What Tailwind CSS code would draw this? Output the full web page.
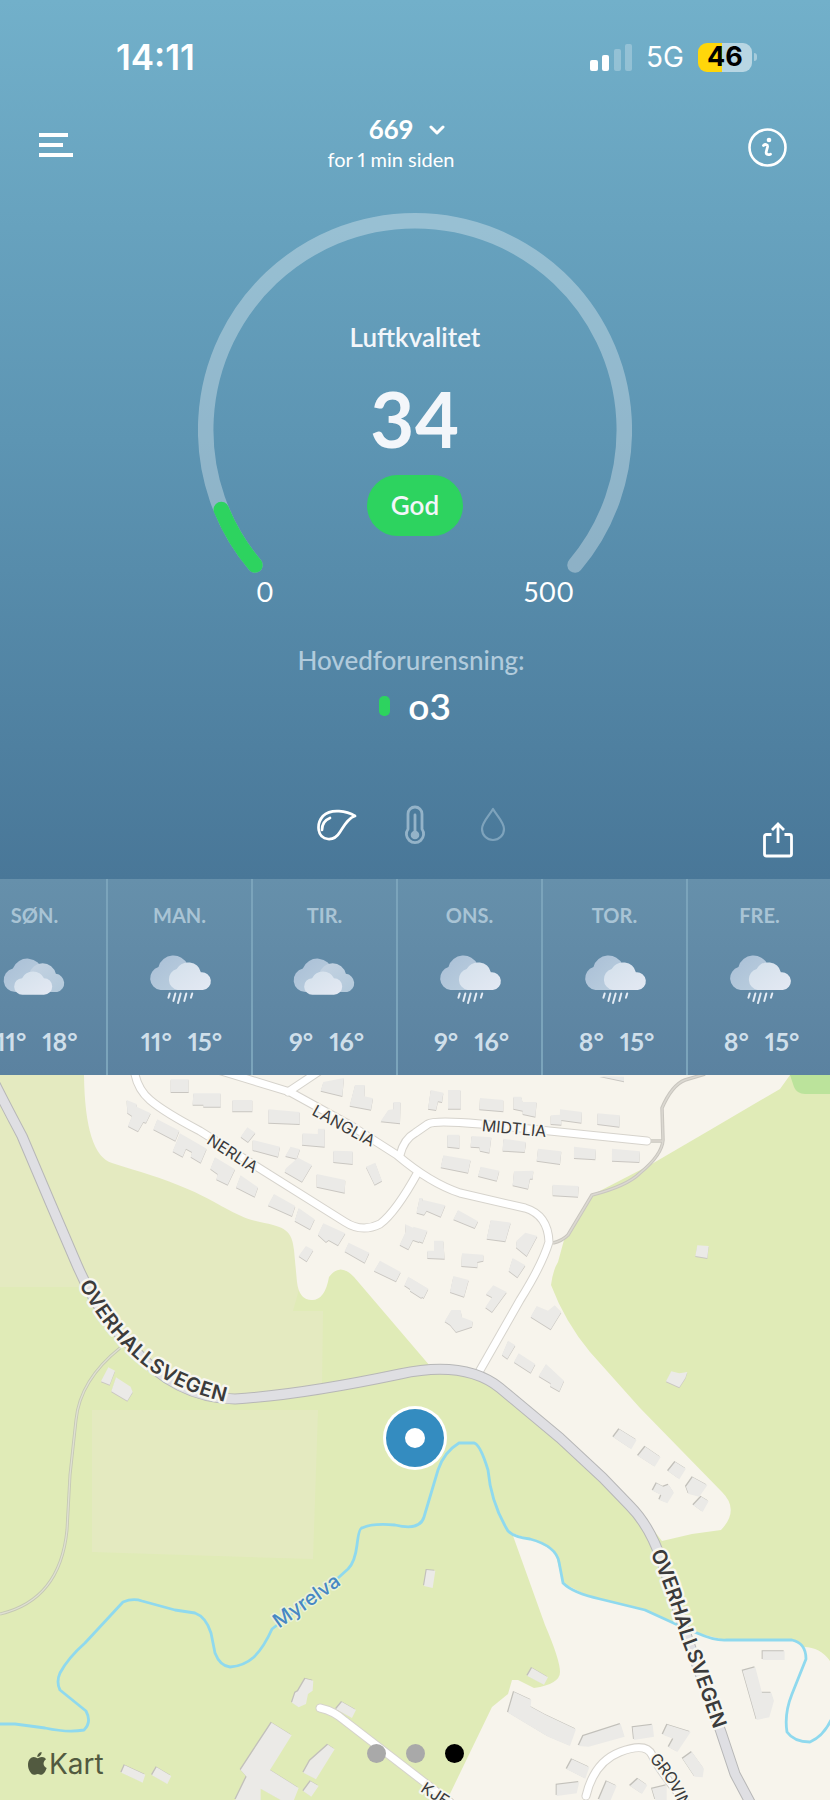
<!DOCTYPE html>
<html lang="nb">
<head>
  <meta charset="UTF-8">
  <meta name="viewport" content="width=device-width, initial-scale=1.0">
  <title>Luftkvalitet</title>
  <script src="https://cdn.jsdelivr.net/npm/@tailwindcss/browser@4"></script>
</head>

<body class="min-h-screen flex flex-col bg-[#e0ebb7] font-[Lato,sans-serif] proportional-nums text-white">

  <!-- Air quality -->
  <header class="bg-linear-to-b from-[#72b0ca] via-[#5d95b3] to-[#497798]">

    <!-- Status bar -->
    <div class="flex items-center justify-between pt-[37px] pl-[116px] pr-[73px] font-[Inter,sans-serif]">
      <span class="text-[35px] leading-10 font-semibold">14:11</span>
      <div class="flex items-center">
        <svg class="w-[42px] h-[27px]" viewBox="0 0 42 27" fill="#fff">
          <rect x="0" y="16" width="8" height="11" rx="2"/>
          <rect x="12" y="11" width="7" height="16" rx="2"/>
          <rect x="24" y="5" width="7" height="22" rx="2" opacity=".25"/>
          <rect x="35" y="0" width="7" height="27" rx="2" opacity=".25"/>
        </svg>
        <span class="ml-3.5 text-[28px] leading-10">5G</span>
        <span class="ml-3.5 w-[54px] h-[29px] rounded-[9px] bg-linear-to-r from-[#ffd60a] from-45% to-[#b8d6e3] to-45% flex items-center justify-center text-[27px] font-bold text-black">46</span>
        <span class="ml-0.5 w-[3px] h-2 rounded-r-full bg-[#a5cbdb]"></span>
      </div>
    </div>

    <!-- Top bar -->
    <nav class="mt-[38px] pl-[39px] pr-[43px] grid grid-cols-[1fr_auto_1fr] items-center">
      <button type="button" aria-label="Meny" class="justify-self-start">
        <svg class="w-[34px] h-6" viewBox="0 0 34 24" fill="#fff">
          <path d="M0 0h29v4H0zM0 10h24v4H0zM0 20h34v4H0z"/>
        </svg>
      </button>
      <button type="button" class="pr-11 flex flex-col items-center">
        <span class="relative text-[26px] leading-7 font-bold">669
          <svg class="absolute left-full top-2.5 ml-4 w-4 h-[11px]" viewBox="0 0 16 11" fill="none" stroke="#fff" stroke-width="3" stroke-linecap="round" stroke-linejoin="round">
            <path d="M2 2l6 6 6-6"/>
          </svg>
        </span>
        <span class="text-[20px] leading-8">for 1 min siden</span>
      </button>
      <button type="button" aria-label="Info" class="justify-self-end mt-1">
        <svg class="w-[39px] h-[39px]" viewBox="0 0 39 39" fill="none" stroke="#fff">
          <circle cx="19.5" cy="19.5" r="18" stroke-width="2.6"/>
          <circle cx="21" cy="12" r="2.3" fill="#fff" stroke="none"/>
          <path d="M15.500 17.500c1.500-1.500 4.500-1.500 4 1.500l-1.200 4.500c-.7 3 1.500 3.700 4.200 2.700" stroke-width="2.800" stroke-linecap="round"/>
        </svg>
      </button>
    </nav>

    <!-- Gauge -->
    <main class="mt-[38px] flex flex-col items-center">
      <div class="grid justify-items-center">
        <svg class="col-start-1 row-start-1 w-[434px] h-[361px]" viewBox="198 212 434 361" fill="none" stroke-width="15.500" stroke-linecap="round">
          <path d="M255 564A209.300 209.300 0 1 1 575 564" stroke="#fff" stroke-opacity=".32"/>
          <path d="M255 564A209.300 209.300 0 0 1 221.300 508.500" stroke="#2dd35f"/>
        </svg>
        <div class="col-start-1 row-start-1 pt-[108px] flex flex-col items-center text-[#f3f6fa]">
          <h1 class="text-[26px] leading-8 font-semibold">Luftkvalitet</h1>
          <p class="mt-[26px] text-[76px] leading-20 font-bold">34</p>
          <p class="mt-4 h-[61px] px-6 rounded-full bg-[#2dd35f] text-[26px] leading-[60px] font-semibold">God</p>
        </div>
      </div>
      <div class="mt-0.5 w-[318px] flex justify-between text-[27px] leading-8">
        <span>0</span>
        <span>500</span>
      </div>
      <p class="mt-9 pr-2 text-[26px] leading-8 font-medium text-[#b1cbdc]">Hovedforurensning:</p>
      <p class="mt-2 flex items-center gap-[18px] text-[37px] leading-11 font-semibold">
        <span class="w-[11px] h-5 rounded-[5px] bg-[#2dd35f]"></span>o3
      </p>
    </main>

    <div class="mt-[75px] pb-5 pl-9 pr-9 grid grid-cols-[1fr_auto_1fr] items-start">
      <div class="col-start-2 flex gap-[38px]">
        <button type="button" aria-label="Luft">
          <svg class="w-10 h-11" viewBox="0 0 40 44" fill="none" stroke="#fff" stroke-width="2.700" stroke-linejoin="round" stroke-linecap="round">
            <path d="M38 13C30 8 14 5 6 13c-7 8-6 22 5 23 6 .5 9-2 12-7 4-6 8-14 15-16z"/>
            <path d="M5 27c0-6 3-10 8-12"/>
          </svg>
        </button>
        <button type="button" aria-label="Temperatur">
          <svg class="w-10 h-11" viewBox="0 0 40 44" fill="none" stroke="#94b3c8" stroke-width="2.800" stroke-linecap="round">
            <path d="M13 26V11a7 7 0 0 1 14 0V26a8.600 8.600 0 1 1-14 0z"/>
            <path d="M20 12v18"/>
            <circle cx="20" cy="32" r="4.300" fill="#94b3c8" stroke="none"/>
          </svg>
        </button>
        <button type="button" aria-label="Fuktighet">
          <svg class="w-10 h-11" viewBox="0 0 40 44" fill="none" stroke="#7ea3bc" stroke-width="2.200" stroke-linejoin="round">
            <path d="M20 6c-4 7-11 13-11 20a11 11 0 0 0 22 0c0-7-7-13-11-20z"/>
          </svg>
        </button>
      </div>
      <button type="button" aria-label="Del" class="justify-self-end mt-4">
        <svg class="w-8 h-10" viewBox="0 0 32 40" fill="none" stroke="#fff" stroke-width="2.800">
          <path d="M9.500 15.500H4.500a2 2 0 0 0-2 2V35a2 2 0 0 0 2 2h23a2 2 0 0 0 2-2V17.500a2 2 0 0 0-2-2h-5" stroke-linejoin="round"/>
          <path d="M16 24V5M10 11l6-6 6 6"/>
        </svg>
      </button>
    </div>
  </header>

  <!-- Weather icons, used by every day in the forecast -->
  <svg class="absolute w-0 h-0" aria-hidden="true">
    <defs>
      <linearGradient id="cloudBack" x1="0" y1="0" x2="1" y2="1">
        <stop offset="0" stop-color="#a9bfd6"/>
        <stop offset="1" stop-color="#bccfdf"/>
      </linearGradient>
      <linearGradient id="cloudMid" x1="0" y1="0" x2="1" y2="1">
        <stop offset="0" stop-color="#c5d3e2"/>
        <stop offset="1" stop-color="#b3c9db"/>
      </linearGradient>
      <linearGradient id="cloudFront" x1="0" y1="0" x2="1" y2="1">
        <stop offset="0" stop-color="#d3e0eb"/>
        <stop offset="1" stop-color="#e4e9f3"/>
      </linearGradient>
    </defs>
    <symbol id="cloudy" viewBox="0 250 210 160">
      <path d="M46 368a36 36 0 0 1-8-71A47 47 0 0 1 128 305V368z" fill="url(#cloudBack)"/>
      <path d="M90 368a30 30 0 0 1-2-55A41 41 0 0 1 168 313a28 28 0 0 1 4 55z" fill="url(#cloudMid)"/>
      <path d="M68 376a24 24 0 0 1-2-50A37 37 0 0 1 132 326a25 25 0 0 1 0 50z" fill="url(#cloudFront)"/>
    </symbol>
    <symbol id="rain" viewBox="0 250 210 160">
      <path d="M46 362a36 36 0 0 1-6-70A47 47 0 0 1 128 285V362z" fill="url(#cloudBack)"/>
      <path d="M98 362a33 33 0 0 1-3-64A40 40 0 0 1 168 308a27 27 0 0 1 6 54z" fill="url(#cloudFront)"/>
      <path d="M74 372l-4 13M91 372l-6 23M107 372l-8 29M124 372l-6 23M142 372l-4 13" stroke="#e4ecf5" stroke-width="6" stroke-linecap="round"/>
    </symbol>
  </svg>

  <!-- Forecast -->
  <section class="overflow-hidden bg-linear-to-b from-[#6690ab] to-[#5b82a0]">
    <ol id="forecast" class="-ml-[37px] flex"></ol>
  </section>

  <!-- Map -->
  <section class="relative text-black font-[Inter,sans-serif]">
    <svg class="block w-full h-auto" viewBox="0 1075 830 725">
      <defs>
        <path id="mainRoad" d="M-8 1078Q5 1104 22 1136L50 1202 77 1265Q100 1318 132 1347Q175 1398 235 1399Q300 1395 400 1374Q465 1360 500 1388L560 1438 603 1478 630 1506Q650 1526 662 1562L688 1640 721 1732 735 1774 752 1806"/>
        <g id="smallRoads">
          <path d="M134 1068Q136 1088 150 1100T200 1131L345 1222Q362 1233 380 1224Q396 1212 418 1172"/>
          <path d="M218 1070L290 1092 350 1125 397 1155Q430 1183 460 1193L525 1208Q548 1215 549 1242Q542 1265 520 1300L479 1372"/>
          <path d="M288 1092L318 1072"/>
          <path d="M400 1155Q404 1139 415 1133L428 1124Q435 1120 480 1124L647 1141"/>
          <path d="M320 1708Q334 1711 345 1721L450 1802"/>
          <path d="M586 1796Q594 1762 620 1752T652 1755T685 1802"/>
        </g>
        <g id="northHouses">
          <path transform="translate(0 1070) scale(.3333)" d="M512 28h54v38h-54zM580 70h82v40h-52v-6h-32zM697 90h60v34h-60zM805 118l94 8v36l-94-4zM962 62l8-26 62-12-5 54zM1065 45h30l-2 34 26 6-6 34-64-12zM1165 120l15-2v-22h22l-2 64-58-6zM722 200l20-28 24 16-22 28zM908 190l46 2v-16h20v54l-68-6zM758 210l82 20-6 30-76-20zM1000 242l58 2v38l-58-6zM1098 290l28-12 20 54-22 12zM872 230l28 8-10 28-34-8zM858 295l36-32 42 22-30 50-52-30zM950 312l86 18-2 38-84-18zM380 90l30 12v8l42 20-14 28-8-2-16 28-30-16 12-30-14-10zM472 148l66 34-12 30-66-34zM540 190l80 46-18 42-30-18 4-14-18-10-10 24-30-16zM645 262l60 36-22 46-34-16 4-16-22-16zM722 316l52 36-10 28-56-28zM822 372l64 36-10 30-72-32zM896 414l48 34-14 30-46-26zM970 460l66 30-22 36-28-16-8 6-24-22zM918 528l22 12-20 34-24-16zM1046 518l62 30-14 30-60-34zM1140 572l62 34-14 28-66-32zM1225 620l60 36-14 28-58-38zM325 892l20 10-16 42-26-10zM348 922l44 28 6 16-16 26-48-28zM1258 384l10 0v44h-16zM1215 462l30 14 20 6-8 34-18-6-14 28-26-14 18-38z"/>
          <path transform="translate(410 1070) scale(.3333)" d="M568 18l74 2v14zM62 60l38 8-4 28-12-2-6 26-24-4zM114 60h38v56h-38zM210 84l70 6v34l-72-6zM310 80h24l4 16h42l-4 44-38-8v-10l-28-6zM450 118l66 8-2 32-60-8v14l-32-2v-26l28-2zM562 130l68 6-2 34-66-8zM112 194h36v40l-36-4zM184 198l60 4-6 46-28-6-2-10-26-2zM280 206l68 10-4 30-66-4zM384 236l70 8-4 38-70-10zM492 230l66 8-2 30-64-4zM606 236l84 8-2 32-82-4zM100 256l82 14-8 38-82-16zM212 290l56 12-8 30-56-14zM312 304l58-2-2 24h-8l-6 30-46-10zM428 344l78 4-2 32-76-4zM22 410l18-20 66 16-14 34-42-18-8 12-22-6zM144 420l60 34-10 20-64-26zM242 450l60 8-16 56-56-8zM346 488l36 10-32 60-32-26 2-20zM308 564l38 22-24 36-26-20zM72 512h28l4 54-52-2v-22h20zM156 550l64 4v18l-18 4v16l-48-4zM10 470l42 12-14 36-28-10zM130 618l46 12-14 50-42-14zM250 646l40 20-44 60-20-14 20-30-18-10zM124 720h28l4 22 32 12-2 16-48 16-18-22-16-10zM0 624l50 30-16 30-34-22zM380 708l34 14 20-16 20 20-32 52-60-38zM294 812l22 14-24 40-16-12zM326 850l50 32-14 26-50-32zM408 882l54 50-14 32-28-16 2-8-36-22zM862 526l34 2-4 36-36-6zM784 904l24 6 24-4-6 18-18 28-40-18z"/>
        </g>
        <g id="southHouses">
          <path transform="translate(410 1430) scale(.3333)" d="M628-2l52 32-16 28-54-36zM706 50l46 32-18 28-50-32zM796 96l32 20-20 32-34-24zM848 142l44 24-24 34-32-8-8-22zM874 200l22 14-18 32-28-20zM740 160l20 10 16-6 16 24-20 32-24-10 6-14-26-14zM50 420l26 2-8 52-26-6zM1058 664h66v26h-66zM998 722l38-10 20 76h28l8 24-14 50-38 8zM366 714l48 28-12 22-50-26zM312 786l52 24-2 20 44 24 92 44-18 50-66-28-120-72zM520 918l112-36 12 38-108 30-30-2zM668 892l60-8 4 36-60 10zM772 884l70 22-40 60-26-14 14-26-32-12zM846 966l36 50-4 26-24-2-36-54zM486 988l52 24-12 34-56-28zM440 1064l68-8-8 34-60 8zM590 1054l30 14-18 42h-36zM684 1046l28 20-16 26-36-24zM726 1076l44-10v44h-34z"/>
          <path transform="translate(0 1430) scale(.3333)" d="M916 746l24 6-2 30-14 10-6 30-22 10-20-14 10-30 8-4zM1026 816l42 24-12 24-48-26zM815 878l60 38-65 104 86 54-14 36h-40l-60-34v34h-76l34-70-18-20zM984 944l20 14-56 90-38-20 20-36zM932 1054l24 14-22 32-24-16zM374 1006l62 28-8 24-64-30zM470 1012l44 26-12 24-46-26z"/>
        </g>
        <path id="labelOverhall1" d="M85 1281Q108 1324 139 1352Q176 1387 250 1400"/>
        <path id="labelOverhall2" d="M657 1550Q675 1592 688 1637Q708 1690 728 1750"/>
        <path id="labelNerlia" d="M209 1138L265 1174"/>
        <path id="labelLanglia" d="M314 1109L387 1149"/>
        <path id="labelMidtlia" d="M482 1125L565 1133"/>
        <path id="labelMyrelva" d="M275 1623L350 1570"/>
        <path id="labelGrovin" d="M653 1756Q672 1770 692 1820"/>
        <path id="labelKje" d="M423 1786L471 1817"/>
      </defs>

      <!-- ground -->
      <path d="M0 1075H830V1800H0z" fill="#e0ebb7"/>
      <path d="M0 1075H110L310 1250 293 1311 323 1311 322 1384 240 1399Q170 1395 130 1345L82 1287H0zM92 1410H318L313 1559 92 1552z" fill="#e4eac0"/>
      <path d="M84 1075Q85 1155 112 1163C140 1172 160 1177 190 1190S235 1217 260 1222 292 1230 294 1250L297 1282Q299 1300 312 1300T329 1277Q340 1262 354 1277L430 1366 480 1372 560 1438 630 1500 662 1541 692 1534 721 1530Q740 1510 722 1492L640 1408 590 1352Q565 1322 551 1285Q553 1270 558 1262L564 1240 592 1195 650 1165 710 1130 780 1089 790 1075z" fill="#f7f4ec"/>
      <path d="M512 1533L540 1543 555 1552 563 1583 590 1597 645 1610 697 1633 725 1640H792L804 1647Q820 1647 830 1661V1800H447L492 1707 508 1694 512 1680H518L534 1688Q560 1684 560 1672T545 1625z" fill="#f7f4ec"/>
      <path d="M790 1075L794 1087Q797 1094 805 1094H830V1075z" fill="#bbe39b"/>

      <!-- footpaths -->
      <g fill="none" stroke-linejoin="round">
        <path d="M705 1074L685 1080Q672 1085 662 1108L663 1140Q662 1155 640 1173Q627 1186 592 1195L568 1235Q562 1241 553 1243M650 1141H662" stroke="#c9c6bf" stroke-width="3.500"/>
        <path d="M705 1074L685 1080Q672 1085 662 1108L663 1140Q662 1155 640 1173Q627 1186 592 1195L568 1235Q562 1241 553 1243M650 1141H662" stroke="#dbd8d1" stroke-width="1.500"/>
        <path d="M120 1348Q80 1380 76 1420L70 1475 67 1530Q60 1600 0 1614" stroke="#c5c8b4" stroke-width="3"/>
        <path d="M120 1348Q80 1380 76 1420L70 1475 67 1530Q60 1600 0 1614" stroke="#dfe0d2" stroke-width="1.300"/>
      </g>

      <!-- river -->
      <path d="M-2 1724L15 1724 45 1728Q68 1733 84 1730Q92 1722 86 1711L60 1690Q56 1682 60 1673Q68 1658 85 1643L123 1602Q133 1598 142 1601L175 1610 195 1613Q206 1617 211 1633L215 1653Q220 1666 230 1667Q244 1666 254 1657Q264 1647 272 1629L338 1578 348 1569Q355 1562 357 1545T362 1528Q372 1523 395 1525Q420 1531 424 1517L438 1470Q444 1452 459 1443H474Q480 1444 488 1470Q491 1503 508 1531Q514 1537 530 1539Q556 1546 559 1562L563 1583Q573 1593 600 1599L645 1610 680 1626 697 1633Q715 1641 727 1640L792 1640Q806 1643 806 1659L792 1694Q784 1714 787 1732Q794 1742 810 1742Q824 1736 832 1718" fill="none" stroke="#8fd9ee" stroke-width="2.800" stroke-linejoin="round"/>

      <!-- buildings -->
      <use href="#northHouses" y="1" fill="#c9c6c1"/>
      <use href="#northHouses" fill="#ebeae7"/>
      <use href="#southHouses" x="-1" y="-1" fill="#c2c0ba"/>
      <use href="#southHouses" fill="#ebeae7"/>

      <!-- roads -->
      <g fill="none" stroke-linejoin="round" stroke-linecap="round">
        <use href="#smallRoads" stroke="#d6d3cc" stroke-width="9"/>
        <use href="#smallRoads" stroke="#fff" stroke-width="7"/>
        <use href="#mainRoad" stroke="#b7b7b7" stroke-width="11"/>
        <use href="#mainRoad" stroke="#dfdfe3" stroke-width="9"/>
      </g>

      <!-- road names -->
      <g stroke="#f7f6f0" stroke-linejoin="round" paint-order="stroke" fill="#3b3b3b">
        <g class="text-[20px] font-semibold" stroke-width="5">
          <text dy="7"><textPath href="#labelOverhall1">OVERHALLSVEGEN</textPath></text>
          <text dy="7"><textPath href="#labelOverhall2">OVERHALLSVEGEN</textPath></text>
        </g>
        <g class="text-[16px]" stroke-width="4">
          <text dy="6"><textPath href="#labelNerlia">NERLIA</textPath></text>
          <text dy="6"><textPath href="#labelLanglia">LANGLIA</textPath></text>
          <text dy="6"><textPath href="#labelMidtlia">MIDTLIA</textPath></text>
          <text dy="6"><textPath href="#labelGrovin">GROVIN</textPath></text>
          <text dy="6"><textPath href="#labelKje">KJE</textPath></text>
        </g>
        <text class="text-[20px] font-medium" dy="7" fill="#4788c4" stroke="#eaf3d8" stroke-width="3"><textPath href="#labelMyrelva">Myrelva</textPath></text>
      </g>

      <!-- station pin -->
      <circle cx="415" cy="1438" r="32" fill="#fff"/>
      <circle cx="415" cy="1438" r="29" fill="#348cc0"/>
      <circle cx="415" cy="1438" r="10" fill="#fff"/>
    </svg>

    <a href="#" class="absolute left-7 bottom-5 flex items-center gap-0.5 text-[28px] leading-8 text-[#525a40]">
      <svg class="w-[19px] h-6" viewBox="0 0 19 24" fill="#525a40">
        <path d="M13.600 0c.2 2.500-1.900 5-4.300 4.900C9 2.600 11.200.2 13.600 0z"/>
        <path d="M9.700 6.300c1 0 2.300-1.300 4.300-1.200 1.700.1 3.100.8 4 2.100-3.600 2.300-3 7.300.7 8.800-1 2.900-3 6.700-5.300 6.800-1.400 0-1.900-.9-3.600-.9s-2.300.9-3.600.9C3 22.900 0 17.500 0 13c0-5 2.900-7.900 5.800-7.900 1.700 0 2.900 1.200 3.900 1.200z"/>
      </svg>
      Kart
    </a>

    <div class="absolute inset-x-0 bottom-[37px] flex justify-center gap-5">
      <button type="button" aria-label="Side 1" class="w-[19px] h-[19px] rounded-full bg-[#a9a9a9]"></button>
      <button type="button" aria-label="Side 2" class="w-[19px] h-[19px] rounded-full bg-[#a9a9a9]"></button>
      <button type="button" aria-label="Side 3" class="w-[19px] h-[19px] rounded-full bg-black"></button>
    </div>
  </section>

  <script>
    const days = [
      { name: 'SØN.', icon: 'cloudy', min: 11, max: 18 },
      { name: 'MAN.', icon: 'rain', min: 11, max: 15 },
      { name: 'TIR.', icon: 'cloudy', min: 9, max: 16 },
      { name: 'ONS.', icon: 'rain', min: 9, max: 16 },
      { name: 'TOR.', icon: 'rain', min: 8, max: 15 },
      { name: 'FRE.', icon: 'rain', min: 8, max: 15 },
    ];

    document.getElementById('forecast').innerHTML = days.map(day => `
      <li class="w-[145px] shrink-0 pt-[22px] pb-[19px] flex flex-col items-center border-r-2 border-[#7ba4bb]">
        <span class="text-[20px] leading-7 font-bold text-[#a9c4d5]">${day.name}</span>
        <svg class="mt-6 w-[70px] h-[53px]"><use href="#${day.icon}"/></svg>
        <span class="mt-5 pl-1 flex gap-4 text-[25px] leading-[30px] font-bold text-[#cfdfea]">
          <span>${day.min}°</span>
          <span>${day.max}°</span>
        </span>
      </li>
    `).join('');
  </script>

</body>
</html>
